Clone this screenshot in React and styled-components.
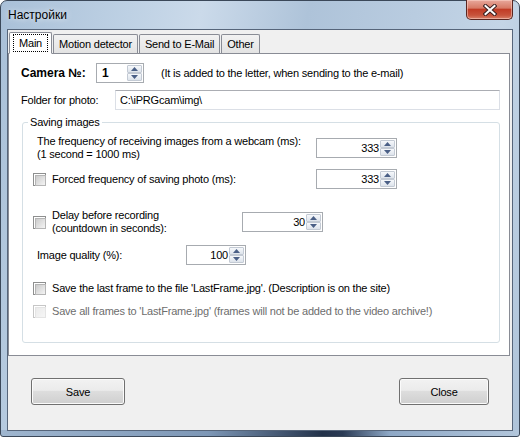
import React from "react";
import styled, { createGlobalStyle } from "styled-components";

const GlobalStyle = createGlobalStyle`
  html, body {
    margin: 0;
    padding: 0;
    background: #ffffff;
  }
  body {
    font-family: "Liberation Sans", Arial, sans-serif;
    font-size: 11px;
    letter-spacing: -0.2px;
    color: #000;
  }
  * {
    box-sizing: border-box;
  }
`;

const Window = styled.div`
  width: 520px;
  height: 437px;
  display: flex;
  flex-direction: column;
  padding: 0 6px 5px;
  border: 1px solid #3b4859;
  border-radius: 7px 7px 3px 3px;
  background:
    linear-gradient(to right, #9fb6cf, #7d97b6 40%, #23324a 62%, #2b3b55 66%, #8ea8c6 75%, #b2c6db) bottom / 100% 6px no-repeat,
    linear-gradient(100deg, #a9c0d8 0%, #bed1e4 22%, #cbdaea 34%, #aec3d9 52%, #b9cce0 70%, #c4d5e6 85%, #aec3d9 100%);
`;

const TitleBar = styled.div`
  height: 28px;
  display: flex;
  align-items: flex-start;
  justify-content: space-between;
`;

const Title = styled.div`
  font-size: 12px;
  letter-spacing: 0;
  line-height: 28px;
  padding-left: 1px;
  color: #000;
  text-shadow: 0 0 6px rgba(255, 255, 255, 0.9);
`;

const CloseButton = styled.div`
  width: 47px;
  height: 20px;
  margin-top: -1px;
  display: flex;
  align-items: center;
  justify-content: center;
  border: 1px solid #5a2620;
  border-top: none;
  border-radius: 0 0 5px 5px;
  background: linear-gradient(#e8a89c 0%, #d77a66 42%, #c13c26 50%, #c8533b 80%, #d9826b 100%);
  box-shadow: inset 0 0 0 1px rgba(255, 220, 210, 0.5);
`;

const Client = styled.div`
  flex: 1;
  display: flex;
  flex-direction: column;
  background: #f0f0f0;
  border: 1px solid #56657a;
  padding: 1px 2px 0 0;
`;

const TabStrip = styled.div`
  display: flex;
  align-items: flex-end;
  height: 22px;
  padding-left: 1px;
  position: relative;
  z-index: 1;
`;

const Tab = styled.div`
  height: ${(p) => (p.$active ? "22px" : "19px")};
  display: flex;
  align-items: center;
  padding: 0 ${(p) => (p.$active ? "3px" : "5px")};
  margin-right: 1px;
  border: 1px solid #898c95;
  border-bottom: ${(p) => (p.$active ? "1px solid #ffffff" : "none")};
  border-radius: 2px 2px 0 0;
  background: ${(p) => (p.$active ? "#ffffff" : "linear-gradient(#f2f2f2, #e3e3e3)")};
  margin-bottom: ${(p) => (p.$active ? "-1px" : "0")};
  font-size: 11px;
`;

const FocusLabel = styled.span`
  padding: 2px 5px 1px;
  border: 1px dotted #000;
  line-height: 13px;
`;

const TabPage = styled.div`
  height: 303px;
  background: #ffffff;
  border: 1px solid #898c95;
  padding: 0 9px 0 12px;
  display: flex;
  flex-direction: column;
`;

const Row = styled.div`
  display: flex;
  align-items: center;
  height: ${(p) => p.$h || 20}px;
  margin-top: ${(p) => p.$mt || 0}px;
`;

const CameraLabel = styled.div`
  width: 75px;
  font-size: 12px;
  font-weight: bold;
  letter-spacing: 0;
`;

const Note = styled.div`
  margin-left: 17px;
`;

const Label = styled.div`
  width: ${(p) => p.$w}px;
  padding-left: ${(p) => p.$pad || 0}px;
  line-height: 13px;
  color: ${(p) => (p.$disabled ? "#6d6d6d" : "#000")};
`;

const TextBox = styled.div`
  flex: 1;
  height: 20px;
  display: flex;
  align-items: center;
  padding-left: 4px;
  border: 1px solid #dbdfe6;
  border-top-color: #abadb3;
  background: #fff;
`;

const Group = styled.fieldset`
  margin: 6px 0 0 1px;
  padding: 6px 0 0 10px;
  height: 227px;
  border: 1px solid #d5dfe5;
  border-radius: 3px;
`;

const Legend = styled.legend`
  padding: 0 2px;
  margin-left: -5px;
  line-height: 13px;
`;

const SpinBox = styled.div`
  width: ${(p) => p.$w}px;
  height: 20px;
  display: flex;
  padding: 1px;
  border: 1px solid #a7abb0;
  background: #fff;
`;

const SpinValue = styled.div`
  flex: 1;
  display: flex;
  align-items: center;
  justify-content: ${(p) => (p.$left ? "flex-start" : "flex-end")};
  padding: 0 1px 0 4px;
  font-size: ${(p) => (p.$bold ? "12px" : "11px")};
  font-weight: ${(p) => (p.$bold ? "bold" : "normal")};
`;

const SpinButtons = styled.div`
  width: 15px;
  display: flex;
  flex-direction: column;
`;

const SpinButton = styled.div`
  flex: 1;
  display: flex;
  align-items: center;
  justify-content: center;
  border: 1px solid #c3cad4;
  border-radius: 1px;
  background: linear-gradient(#f6f8fb, #dde3eb);
`;

const CheckBox = styled.div`
  width: 13px;
  height: 13px;
  margin-right: 6px;
  flex: none;
  border: 1px solid ${(p) => (p.$disabled ? "#c6c6c6" : "#8e8f8f")};
  background: #fff;
  padding: 1px;

  &::after {
    content: "";
    display: block;
    width: 100%;
    height: 100%;
    background: ${(p) =>
      p.$disabled
        ? "linear-gradient(135deg, #ebebeb, #f6f6f6)"
        : "linear-gradient(135deg, #cbcbcb, #f4f4f4)"};
    border: 1px solid ${(p) => (p.$disabled ? "#e4e4e4" : "#b5b5b5")};
  }
`;

const ButtonBar = styled.div`
  display: flex;
  justify-content: space-between;
  padding: 22px 21px 0 23px;
`;

const Button = styled.div`
  width: ${(p) => p.$w}px;
  height: 27px;
  display: flex;
  align-items: center;
  justify-content: center;
  border: 1px solid #707070;
  border-radius: 3px;
  background: linear-gradient(#f2f2f2 0%, #ebebeb 45%, #dddddd 50%, #cfcfcf 100%);
  box-shadow: inset 0 0 0 1px #fbfbfb;
  font-size: 11px;
`;

function Arrow({ up }) {
  return (
    <svg width="7" height="4" viewBox="0 0 7 4">
      <path d={up ? "M0 4 L3.5 0 L7 4 Z" : "M0 0 L3.5 4 L7 0 Z"} fill="#4a5f86" />
    </svg>
  );
}

function Spin({ w, value, left, bold }) {
  return (
    <SpinBox $w={w}>
      <SpinValue $left={left} $bold={bold}>
        {value}
      </SpinValue>
      <SpinButtons>
        <SpinButton>
          <Arrow up />
        </SpinButton>
        <SpinButton>
          <Arrow />
        </SpinButton>
      </SpinButtons>
    </SpinBox>
  );
}

function CloseGlyph() {
  return (
    <svg width="14" height="12" viewBox="0 0 14 12">
      <path d="M2.5 2 L11.5 10 M11.5 2 L2.5 10" stroke="#3a2020" strokeWidth="4" strokeLinecap="square" />
      <path d="M2.5 2 L11.5 10 M11.5 2 L2.5 10" stroke="#ffffff" strokeWidth="2" strokeLinecap="square" />
    </svg>
  );
}

export default function App() {
  return (
    <>
      <GlobalStyle />
      <Window>
        <TitleBar>
          <Title>Настройки</Title>
          <CloseButton>
            <CloseGlyph />
          </CloseButton>
        </TitleBar>
        <Client>
          <TabStrip>
            <Tab $active>
              <FocusLabel>Main</FocusLabel>
            </Tab>
            <Tab>Motion detector</Tab>
            <Tab>Send to E-Mail</Tab>
            <Tab>Other</Tab>
          </TabStrip>
          <TabPage>
            <Row $mt={9}>
              <CameraLabel>Camera №:</CameraLabel>
              <Spin w={48} value="1" left bold />
              <Note>(It is added to the letter, when sending to the e-mail)</Note>
            </Row>
            <Row $mt={7}>
              <Label $w={94}>Folder for photo:</Label>
              <TextBox>C:\iPRGcam\img\</TextBox>
            </Row>
            <Group>
              <Legend>Saving images</Legend>
              <Row $h={26}>
                <Label $w={283} $pad={4}>
                  The frequency of receiving images from a webcam (ms):
                  <br />
                  (1 second = 1000 ms)
                </Label>
                <Spin w={81} value="333" />
              </Row>
              <Row $mt={8}>
                <CheckBox />
                <Label $w={264}>Forced frequency of saving photo (ms):</Label>
                <Spin w={81} value="333" />
              </Row>
              <Row $h={26} $mt={20}>
                <CheckBox />
                <Label $w={190}>
                  Delay before recording
                  <br />
                  (countdown in seconds):
                </Label>
                <Spin w={81} value="30" />
              </Row>
              <Row $mt={10}>
                <Label $w={153} $pad={4}>
                  Image quality (%):
                </Label>
                <Spin w={60} value="100" />
              </Row>
              <Row $h={16} $mt={15}>
                <CheckBox />
                <Label $w={420}>
                  Save the last frame to the file 'LastFrame.jpg'. (Description is on the site)
                </Label>
              </Row>
              <Row $h={16} $mt={7}>
                <CheckBox $disabled />
                <Label $w={440} $disabled>
                  Save all frames to 'LastFrame.jpg' (frames will not be added to the video archive!)
                </Label>
              </Row>
            </Group>
          </TabPage>
          <ButtonBar>
            <Button $w={94}>Save</Button>
            <Button $w={90}>Close</Button>
          </ButtonBar>
        </Client>
      </Window>
    </>
  );
}
